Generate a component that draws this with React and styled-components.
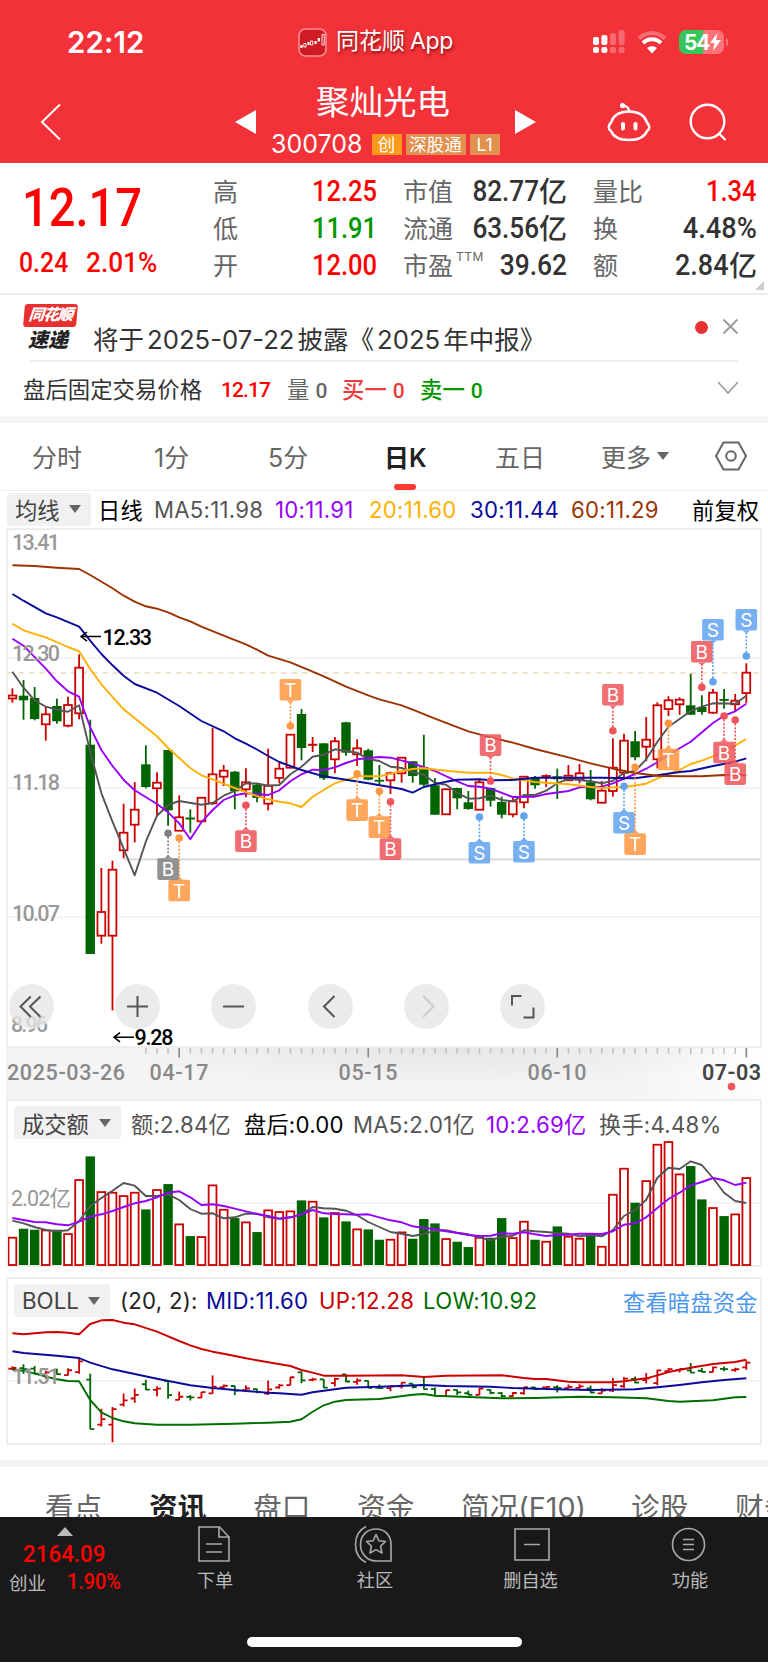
// src/App.jsx
import React from 'react';
import styled, { createGlobalStyle } from 'styled-components';

const RED = '#cc0000';
const GREEN = '#006400';
const PURPLE = '#9600ff';
const ORANGE = '#ffb000';
const NAVY = '#0a0a9c';
const BROWN = '#9c3200';
const GRAY = '#555';

const UI = "'Inter', 'Noto Sans CJK SC', sans-serif";
const DIN = "'Roboto', 'Noto Sans CJK SC', sans-serif";

// [side, high, body top, body bottom, low]
const candles = [
  ['r', 688.3, 695.5, 698.5, 702.7], ['g', 680, 695.7, 700.3, 719.7], ['g', 687, 698, 719, 720.3],
  ['r', 706.7, 714.3, 724.3, 740.7], ['g', 698.7, 706, 721.3, 723.7], ['r', 696.7, 705, 725.7, 727.3],
  ['r', 654.3, 667.7, 713.3, 719.3], ['g', 719.7, 744.7, 954, 954], ['r', 868, 912, 935.7, 943.7],
  ['r', 860.7, 869.7, 935.7, 1010.3], ['r', 803.7, 832.7, 850.3, 858.3], ['r', 782, 809.7, 824.7, 842.3],
  ['g', 745.3, 764.3, 787, 788.3], ['r', 772.3, 782.7, 788.3, 815], ['g', 750, 750, 810.3, 825.7],
  ['r', 795.3, 817.3, 830.7, 830.7], ['g', 809.3, 817.5, 819.5, 832.7], ['r', 797.3, 797.8, 821.3, 822],
  ['r', 727.7, 774.3, 803.3, 805], ['r', 765, 770.7, 776.7, 786], ['g', 771, 771.7, 791.3, 809.3],
  ['r', 768.3, 782.3, 789.3, 797.3], ['g', 783, 784.7, 798, 802.3], ['r', 748.7, 785.7, 803.7, 810.3],
  ['r', 762.7, 768.7, 778, 783.3], ['r', 734, 734.7, 767.7, 768.3], ['g', 709, 714, 748, 760.3],
  ['r', 737, 744, 745.3, 752], ['g', 743.3, 743.3, 778.3, 780], ['r', 737, 741.3, 759.3, 773.3],
  ['g', 721.7, 722.3, 752.7, 755.7], ['r', 739.3, 748.3, 754.3, 766], ['g', 748.7, 750.3, 779.7, 780.3],
  ['g', 765, 779.8, 781, 784], ['r', 771.7, 773.3, 780.3, 794], ['r', 757, 757.7, 773.3, 782.7],
  ['g', 761.3, 761.3, 776, 782.7], ['g', 734.7, 767.3, 784.7, 786], ['g', 778, 785.3, 814.7, 815],
  ['r', 788.7, 789.3, 814.3, 815], ['g', 787.7, 788, 798.3, 809.3], ['g', 791, 802.3, 809, 809.7],
  ['r', 780, 782.3, 809.7, 810], ['g', 787.7, 788, 800.7, 806.7], ['g', 796.7, 802, 814.7, 818.3],
  ['r', 797, 801.3, 814.3, 817.3], ['r', 776, 776.7, 802.3, 808.3], ['g', 776, 778, 785.3, 788.7],
  ['r', 774.3, 775.3, 777.3, 787], ['g', 768.7, 776.3, 779.3, 799], ['r', 765, 775.7, 780.3, 780.3],
  ['r', 764, 773.3, 779.3, 783.3], ['g', 770, 782.3, 799.3, 800.3], ['r', 781, 790.7, 802.7, 803.3],
  ['r', 738.3, 767.7, 791, 796.7], ['r', 733.7, 740.7, 772.7, 780], ['g', 731, 741.3, 757.3, 760.3],
  ['r', 717, 739.7, 746.7, 761.3], ['r', 702.3, 705.3, 759.3, 768.3], ['r', 696.3, 700.3, 709, 716],
  ['r', 697.3, 699.7, 704.3, 714.7], ['g', 673.7, 705.3, 714.7, 715], ['g', 695.3, 707, 712, 714.7],
  ['r', 689, 692.7, 712.7, 713.7], ['g', 689, 699, 700.3, 708.7], ['r', 694, 700.7, 704.3, 711.7],
  ['r', 663.3, 672.7, 693, 703.3],
];

// pairs of [candle index, y]
const ma60 = [[0, 565.3], [2, 566], [4, 567.7], [6, 569], [7, 575], [9, 588.3], [10, 595.7], [11, 601.7], [12, 606.3], [13, 608.7], [14, 612.3], [15, 617.3], [16, 621.3], [17, 626.7], [19, 635.7], [21, 644.3], [22, 649.7], [23, 655.7], [25, 662.3], [27, 671.7], [28, 676.3], [30, 686.7], [32, 695.3], [33, 699.3], [35, 705.3], [36, 709.7], [38, 718.7], [41, 731.3], [43, 737.3], [45, 742.7], [47, 749], [50, 757.3], [52, 763.3], [54, 768.7], [56, 773], [58, 775.7], [60, 776.3], [62, 776.3], [64, 775], [66, 775.3]];
const ma30 = [[0, 594], [1, 600.7], [3, 613.3], [4, 617.3], [6, 626.7], [7, 640.7], [8, 654], [9, 665.3], [10, 675.7], [11, 684], [13, 692.7], [15, 706], [17, 721], [19, 731.3], [20, 738.3], [21, 743.7], [22, 749.5], [23, 756], [24, 762], [26, 770], [28, 776.3], [32, 783.3], [35, 789], [36, 792.7], [37, 787], [39, 781.7], [40, 779.7], [42, 779.3], [43, 780.3], [45, 780], [47, 777.7], [50, 777.7], [53, 777.7], [56, 778.3], [58, 775.3], [60, 772], [61, 771], [63, 766], [65, 761.7], [66, 758.3]];
const ma20 = [[0, 623.7], [1, 630.3], [3, 637.3], [5, 647], [6, 651.3], [7, 669], [8, 684.3], [10, 709.3], [13, 736.3], [14, 748], [16, 768], [17, 775.3], [18, 779.3], [20, 788], [22, 796.2], [23, 799.3], [24, 801.7], [25, 803.3], [26, 807], [27, 796.7], [28, 790], [29, 783.3], [31, 776.3], [33, 776.3], [35, 771], [36, 769], [37, 768.3], [39, 770.7], [41, 772.7], [43, 772.7], [44, 775], [45, 778.5], [47, 782], [50, 784.3], [52, 787], [53, 788], [55, 787], [57, 783.7], [58, 778.3], [60, 770], [61, 764], [62, 760.7], [63, 756.3], [65, 745.3], [66, 739]];
const ma10 = [[0, 638.7], [1, 645.7], [3, 668.7], [4, 681.3], [5, 691.3], [6, 696.7], [7, 727.3], [8, 750], [9, 766], [10, 779.7], [11, 790.3], [13, 804], [14, 812.3], [15, 823.3], [16, 839.3], [17, 822.3], [18, 810], [19, 800], [20, 795.3], [21, 793.3], [22, 794], [23, 795], [24, 790.3], [25, 781.3], [26, 774.3], [27, 769.7], [28, 770], [29, 767.3], [30, 763], [31, 759.3], [33, 757], [34, 757.7], [36, 763.3], [38, 771], [40, 781.3], [41, 786], [42, 786.7], [43, 788.7], [45, 797], [47, 796.7], [48, 794], [50, 791], [51, 787.3], [53, 786.7], [54, 783.3], [56, 774], [57, 768.7], [58, 762.3], [60, 748.3], [61, 741.7], [63, 723], [64, 715.7], [65, 711.3], [66, 703.7]];
const ma5 = [[0, 671.7], [1, 687.7], [2, 700.3], [3, 706.7], [4, 709.7], [5, 711.7], [6, 705.3], [7, 751.7], [8, 793.3], [9, 821.7], [11, 875.3], [12, 841.7], [13, 815.7], [14, 805], [15, 801], [17, 804.7], [18, 803], [19, 795.7], [20, 791], [21, 783.3], [22, 783.5], [23, 785.7], [24, 785], [25, 774.3], [26, 766.7], [27, 756.7], [28, 754.7], [29, 749.3], [31, 752.7], [32, 759], [33, 761], [34, 766.7], [35, 768], [36, 772.3], [37, 774.7], [38, 782.7], [39, 784.7], [40, 792.7], [41, 798.7], [42, 798.3], [43, 795.7], [44, 800], [45, 801.3], [46, 795], [47, 795], [48, 790.7], [49, 783.3], [50, 778.7], [52, 781.3], [53, 783.3], [54, 780.7], [55, 773], [56, 771], [57, 759.3], [58, 741.7], [59, 726.7], [60, 719], [61, 711], [62, 706.7], [63, 703.3], [65, 703.7], [66, 695.7]];

// trade marks: [candle index, letter, dot y, box top, colour]
const marks = [
  [15, 'T', 838, 879.7, 'o'], [14, 'B', 833.3, 858.3, 'k'], [21, 'B', 805.3, 830.3, 'r'],
  [25, 'T', 726, 679, 'o'], [31, 'T', 773.7, 799.3, 'o'], [33, 'T', 791.3, 816.3, 'o'],
  [34, 'B', 801.7, 838.3, 'r'], [42, 'S', 817, 842, 'b'], [43, 'B', 781, 734.3, 'r'],
  [46, 'S', 816, 841, 'b'], [54, 'B', 730.7, 684, 'r'], [55, 'S', 786.3, 812, 'b'],
  [56, 'T', 767.3, 833.3, 'o'], [59, 'T', 723.3, 748.7, 'o'], [62, 'B', 687.3, 641, 'r'],
  [63, 'S', 681.7, 619, 'b'], [64, 'B', 716, 741.7, 'r'], [65, 'B', 720, 763.3, 'r'],
  [66, 'S', 656, 609, 'b'],
];
const markColors = { o: '#ff9640', k: '#808080', r: '#ee5459', b: '#62a3f0' };

const volTops = [427, 400, 403, 405, 403, 416, 254, 183, 290, 292, 302, 292, 342, 284, 266, 387, 422, 425, 270, 343, 368, 381, 410, 345, 350, 348, 315, 319, 366, 353, 378, 402, 402, 433, 433, 411, 430, 371, 384, 431, 439, 455, 427, 427, 368, 428, 379, 433, 439, 393, 424, 430, 415, 454, 298, 220, 322, 257, 148, 140, 237, 212, 312, 338, 362, 357, 248];
const volMa5 = [377, 385, 396, 405, 409, 406, 378, 333, 309, 287, 264, 272, 303, 303, 298, 315, 342, 356, 355, 370, 367, 356, 356, 367, 371, 367, 358, 336, 340, 341, 347, 361, 381, 396, 411, 416, 423, 417, 407, 406, 413, 418, 427, 436, 425, 422, 406, 409, 411, 414, 416, 424, 420, 424, 405, 363, 345, 314, 248, 218, 222, 199, 210, 249, 293, 318, 324];
const volMa10 = [369, 375, 381, 382, 388, 391, 380, 365, 358, 348, 336, 325, 318, 307, 293, 289, 307, 330, 328, 333, 341, 349, 357, 363, 371, 367, 358, 345, 355, 357, 358, 359, 358, 367, 376, 382, 394, 399, 402, 409, 414, 420, 423, 422, 415, 416, 412, 418, 423, 420, 419, 416, 416, 417, 409, 389, 385, 367, 339, 312, 293, 271, 261, 249, 256, 270, 263];

const bollUp = [[0, 190], [1, 193], [3, 187], [4, 186], [5, 188], [6, 193], [7, 162], [8, 151], [9, 150], [10, 158], [11, 163], [13, 185], [15, 213], [16, 226], [17, 237], [18, 245], [19, 251], [21, 265], [23, 277], [25, 288], [26, 300], [27, 308], [28, 317], [30, 317], [35, 316], [37, 321], [39, 317], [44, 316], [46, 324], [47, 327], [48, 327], [50, 335], [51, 337], [54, 337], [55, 334], [56, 329], [57, 325], [58, 316], [59, 306], [61, 293], [63, 282], [65, 276], [66, 269]];
const bollMid = [[0, 244], [1, 249], [4, 257], [6, 264], [7, 278], [9, 298], [11, 312], [13, 326], [16, 346], [18, 354], [21, 363], [23, 368], [24, 370], [26, 374], [27, 367], [30, 353], [33, 350], [37, 345], [39, 348], [43, 350], [45, 354], [48, 357], [52, 360], [56, 358], [58, 352], [60, 345], [62, 337], [64, 330], [66, 325]];
const bollLow = [[0, 299], [1, 302], [2, 311], [4, 328], [5, 333], [6, 334], [7, 390], [8, 427], [9, 444], [10, 454], [11, 460], [13, 464], [16, 464], [20, 461], [23, 458], [25, 455], [26, 448], [27, 425], [28, 406], [29, 395], [30, 390], [33, 387], [36, 374], [37, 372], [38, 377], [41, 381], [44, 385], [47, 384], [51, 380], [54, 382], [57, 385], [59, 393], [60, 395], [63, 391], [65, 382], [66, 381]];

const cx = (i) => 12.4 + 11.12 * i;
const toPoints = (rows) => rows.map(([i, y]) => `${cx(i).toFixed(1)},${y.toFixed(1)}`).join(' ');
const volY = (v) => 1095 + v / 3;
const bollY = (v) => 1270 + v / 3;
const bollPrice = (p) => 1358.3 + (p - 654.3) * 0.236;

const Line = ({ rows, color }) => (
  <polyline points={toPoints(rows)} fill="none" stroke={color} strokeWidth="1.9" strokeLinejoin="round" />
);

const Bar = ({ x, top, bottom, side }) => {
  if (side === 'g') {
    return <rect x={x - 4.7} y={top} width="9.4" height={Math.max(bottom - top, 1.8)} fill={GREEN} />;
  }
  if (bottom - top < 2.5) {
    return <rect x={x - 4.7} y={top - 0.2} width="9.4" height="2" fill={RED} />;
  }
  return (
    <rect x={x - 3.9} y={top} width="7.8" height={bottom - top} fill="#fff" stroke={RED} strokeWidth="1.8" />
  );
};

const Mark = ({ i, letter, dot, top, color }) => {
  const x = cx(i);
  const above = top < dot;
  const edge = above ? top + 21.5 : top;
  const tip = above ? edge + 3 : edge - 3;
  const c = markColors[color];
  return (
    <g>
      <line x1={x} x2={x} y1={dot} y2={edge} stroke={c} strokeWidth="1.6" strokeDasharray="2 1.6" />
      <circle cx={x} cy={dot} r="3.8" fill={c} />
      <g opacity="0.85">
        <rect x={x - 10.8} y={top} width="21.6" height="21.6" rx="1.8" fill={c} />
        <path d={`M${x - 4} ${edge}L${x} ${tip}L${x + 4} ${edge}Z`} fill={c} />
      </g>
      <ChartText x={x} y={top + 17.8} textAnchor="middle" $font={UI} $size={19} $weight={400} $color="#fff">
        {letter}
      </ChartText>
    </g>
  );
};

const PriceChart = () => (
  <Chart viewBox="8 530 752 517" $height={517}>
    {[658, 788, 917].map((y) => (
      <line key={y} x1="8" x2="760" y1={y} y2={y} stroke="#f0f0f0" strokeWidth="1.6" />
    ))}
    <line x1="124" x2="760" y1="859.3" y2="859.3" stroke="#d6d6d6" strokeWidth="1.8" />
    <line x1="8" x2="760" y1="673" y2="673" stroke="#ecd9bd" strokeWidth="1.6" strokeDasharray="5.5 5" />
    {candles.map(([side, high, top, bottom, low], i) => (
      <g key={i}>
        <line x1={cx(i)} x2={cx(i)} y1={high} y2={low} stroke={side === 'r' ? RED : GREEN} strokeWidth="1.8" />
        <Bar x={cx(i)} top={top} bottom={bottom} side={side} />
      </g>
    ))}
    <Line rows={ma5} color={GRAY} />
    <Line rows={ma10} color={PURPLE} />
    <Line rows={ma20} color={ORANGE} />
    <Line rows={ma30} color={NAVY} />
    <Line rows={ma60} color={BROWN} />
    {marks.map(([i, letter, dot, top, color]) => (
      <Mark key={i} i={i} letter={letter} dot={dot} top={top} color={color} />
    ))}
    <ChartText x="12" y="549.7" textLength="48" $weight={500}>13.41</ChartText>
    <ChartText x="12" y="661" textLength="48" $weight={500}>12.30</ChartText>
    <ChartText x="12" y="790.3" textLength="48" $weight={500}>11.18</ChartText>
    <ChartText x="12" y="920.5" textLength="48" $weight={500}>10.07</ChartText>
    <ChartText x="11" y="1031.7" textLength="37" $weight={500}>8.96</ChartText>
    <path d="M101 636.6H81M87 632L81 636.6L87 641.2" fill="none" stroke="#000" strokeWidth="1.5" />
    <ChartText x="102.5" y="644.6" textLength="49.5" $weight={500} $color="#000">12.33</ChartText>
    <path d="M134 1037.3H114M120 1032.7L114 1037.3L120 1041.9" fill="none" stroke="#000" strokeWidth="1.5" />
    <ChartText x="134.5" y="1045" textLength="39" $weight={500} $color="#000">9.28</ChartText>
  </Chart>
);

const DateAxis = () => (
  <Chart viewBox="6 1047 762 52" $height={52} $width={762}>
    <defs>
      <linearGradient id="fade" x1="0" x2="1" y1="0" y2="0">
        <stop offset="0.82" stopColor="#f4f4f4" />
        <stop offset="1" stopColor="#fdfdfd" />
      </linearGradient>
      <radialGradient id="shade" cx="0.5" cy="0" r="0.5" gradientTransform="translate(0 0) scale(1 1.5)">
        <stop offset="0" stopColor="#000" stopOpacity="0.06" />
        <stop offset="1" stopColor="#000" stopOpacity="0" />
      </radialGradient>
    </defs>
    <rect x="6" y="1047" width="756" height="52" fill="url(#fade)" />
    <rect x="110" y="1047" width="652" height="52" fill="url(#shade)" />
    {Array.from({ length: 55 }, (_, k) => k + 12).map((i) => {
      const major = (i - 15) % 17 === 0;
      return (
        <line
          key={i}
          x1={cx(i)}
          x2={cx(i)}
          y1="1047"
          y2={major ? 1056.5 : 1053}
          stroke={major ? '#888' : '#c4c4c4'}
          strokeWidth="1.6"
        />
      );
    })}
    <ChartText x="7" y="1079" textLength="118" $weight={500} $color="#888">2025-03-26</ChartText>
    <ChartText x="149.5" y="1079" textLength="59" $weight={500} $color="#888">04-17</ChartText>
    <ChartText x="338.5" y="1079" textLength="59" $weight={500} $color="#888">05-15</ChartText>
    <ChartText x="527.5" y="1079" textLength="59" $weight={500} $color="#888">06-10</ChartText>
    <ChartText x="702" y="1079" textLength="59" $weight={600} $color="#444">07-03</ChartText>
    <circle cx="731.5" cy="1085.6" r="3.8" fill="#f25555" />
  </Chart>
);

const VolumeChart = () => (
  <Chart viewBox="8 1139 752 127" $height={127}>
    <line x1="8" x2="760" y1="1203" y2="1203" stroke="#f0f0f0" strokeWidth="1.6" />
    {volTops.map((v, i) => (
      <Bar key={i} x={cx(i)} top={volY(v) + 0.4} bottom={1265} side={candles[i][0]} />
    ))}
    <Line rows={volMa5.map((v, i) => [i, volY(v)])} color={GRAY} />
    <Line rows={volMa10.map((v, i) => [i, volY(v)])} color={PURPLE} />
    <ChartText x="11" y="1206" textLength="60">2.02亿</ChartText>
  </Chart>
);

const BollChart = () => (
  <Chart viewBox="8 1317 752 127" $height={127}>
    <line x1="8" x2="760" y1="1381" y2="1381" stroke="#f0f0f0" strokeWidth="1.6" />
    {candles.map(([side, high, top, bottom, low], i) => {
      const x = cx(i);
      const open = bollPrice(side === 'r' ? bottom : top);
      const close = bollPrice(side === 'r' ? top : bottom);
      return (
        <path
          key={i}
          d={`M${x} ${bollPrice(high)}V${bollPrice(low)}M${x - 4} ${open}H${x}M${x} ${close}H${x + 4}`}
          fill="none"
          stroke={side === 'r' ? RED : GREEN}
          strokeWidth="1.8"
        />
      );
    })}
    <Line rows={bollUp.map(([i, v]) => [i, bollY(v)])} color={RED} />
    <Line rows={bollMid.map(([i, v]) => [i, bollY(v)])} color={NAVY} />
    <Line rows={bollLow.map(([i, v]) => [i, bollY(v)])} color="#006e00" />
    <ChartText x="12" y="1384" textLength="48" $weight={500}>11.51</ChartText>
  </Chart>
);

const StatusBar = () => (
  <Status>
    <Clock>22:12</Clock>
    <svg width="29" height="29" viewBox="0 0 29 29">
      <rect x="1" y="1" width="27" height="27" rx="6.5" fill="#cf1c24" stroke="#ff8e90" strokeWidth="1.6" />
      <path d="M3.5 17V20M10.500 14V17M17.500 13V16M20.800 10V13.500" stroke="#fff" strokeWidth="2.200" />
      <path d="M5.800 15.500H8V19H5.800ZM12.500 13H14.700V17H12.500ZM24 6.500H26.200V17H24Z" stroke="#fff" fill="none" strokeWidth="0.900" />
    </svg>
    <AppName>同花顺<span>App</span></AppName>
    <svg width="34" height="24" viewBox="0 0 34 24">
      <g fill="#fff">
        <rect x="1" y="7" width="6" height="8" rx="2" />
        <rect x="1" y="17" width="6" height="6" rx="2" />
        <rect x="9.4" y="5" width="6" height="10" rx="2" />
        <rect x="9.4" y="17" width="6" height="6" rx="2" />
      </g>
      <g fill="#fff" opacity="0.28">
        <rect x="18" y="3" width="6" height="12" rx="2" />
        <rect x="18" y="17" width="6" height="6" rx="2" />
        <rect x="26.6" y="0" width="6" height="15" rx="2" />
        <rect x="26.6" y="17" width="6" height="6" rx="2" />
      </g>
    </svg>
    <Wifi width="30" height="24" viewBox="0 0 30 24">
      <path d="M2 8.5C9.5 1 20.500 1 28 8.500" stroke="#fff" strokeWidth="4" fill="none" opacity="0.3" />
      <path d="M6 13C11 8 19 8 24 13" stroke="#fff" strokeWidth="4" fill="none" />
      <path d="M15 23.500L10 18C13 15.500 17 15.500 20 18Z" fill="#fff" />
    </Wifi>
    <Battery>
      54
      <svg width="11" height="18" viewBox="0 0 11 18">
        <path d="M7.500 0L0 10H4.500L3 18L11 7H6Z" fill="#fff" />
      </svg>
    </Battery>
    <BatteryCap />
  </Status>
);

const Header = () => (
  <Nav>
    <NavSide>
      <svg width="22" height="38" viewBox="0 0 22 38">
        <path d="M20 1.500L2 19L20 36.500" fill="none" stroke="#fff" strokeWidth="2" />
      </svg>
    </NavSide>
    <svg width="21" height="24" viewBox="0 0 21 24"><path d="M21 0V24L0 12Z" fill="#fff" /></svg>
    <Stock>
      <StockName>聚灿光电</StockName>
      <StockCode>
        300708
        <Tag $bg="#fb9a1a" $w={30}>创</Tag>
        <Tag $w={60}>深股通</Tag>
        <Tag $w={30}>L1</Tag>
      </StockCode>
    </Stock>
    <svg width="21" height="24" viewBox="0 0 21 24"><path d="M0 0V24L21 12Z" fill="#fff" /></svg>
    <NavActions>
      <svg width="44" height="40" viewBox="0 0 44 40" fill="none" stroke="#fff" strokeWidth="2.500" strokeLinecap="round">
        <path d="M22 9.500C32 9.500 38 14 40 20.500C43 23.500 43 27 40 29C37.500 35 32 38 22 38S6.500 35 4 29C1 27 1 23.500 4 20.500C6 14 12 9.500 22 9.500Z" />
        <path d="M22 9C22 5.500 20 4.500 16 3.500" />
        <circle cx="15.500" cy="3.600" r="1.400" fill="#fff" />
        <path d="M16 22V26.500M28.500 22V26.500" strokeWidth="4" />
      </svg>
      <svg width="38" height="38" viewBox="0 0 38 38" fill="none" stroke="#fff" strokeWidth="2.400">
        <circle cx="18.500" cy="18.500" r="16.800" />
        <path d="M30 30.500L36.500 37" />
      </svg>
    </NavActions>
  </Nav>
);

const Quote = () => (
  <QuoteBoard>
    <PriceBox>
      <Figure $size={54} $color="#ff0000" $origin="left">12.17</Figure>
      <PriceChange>
        <Figure $size={27} $color="#ff0000" $origin="left" $scale={0.92}>0.24</Figure>
        <Figure $size={27} $color="#ff0000" $origin="left" $scale={0.97}>2.01%</Figure>
      </PriceChange>
    </PriceBox>
    <QuoteColumn $w={164} $gap={26}>
      <QuoteCell><span>高</span><Figure $color="#ff0000" $scale={0.88}>12.25</Figure></QuoteCell>
      <QuoteCell><span>低</span><Figure $color="#009600" $scale={0.88}>11.91</Figure></QuoteCell>
      <QuoteCell><span>开</span><Figure $color="#ff0000" $scale={0.88}>12.00</Figure></QuoteCell>
    </QuoteColumn>
    <QuoteColumn $w={164} $gap={26}>
      <QuoteCell><span>市值</span><Value><Figure $scale={0.9}>82.77</Figure><Unit>亿</Unit></Value></QuoteCell>
      <QuoteCell><span>流通</span><Value><Figure $scale={0.9}>63.56</Figure><Unit>亿</Unit></Value></QuoteCell>
      <QuoteCell><span>市盈<sup>TTM</sup></span><Figure $scale={0.91}>39.62</Figure></QuoteCell>
    </QuoteColumn>
    <QuoteColumn $w={164} $gap={0}>
      <QuoteCell><span>量比</span><Figure $color="#ff0000" $scale={0.88}>1.34</Figure></QuoteCell>
      <QuoteCell><span>换</span><Figure $scale={0.94}>4.48%</Figure></QuoteCell>
      <QuoteCell><span>额</span><Value><Figure $scale={0.93}>2.84</Figure><Unit>亿</Unit></Value></QuoteCell>
    </QuoteColumn>
    <Corner />
  </QuoteBoard>
);

const News = () => (
  <NewsRow>
    <NewsLogo>
      <LogoTop>同花顺</LogoTop>
      <LogoBottom>速递</LogoBottom>
    </NewsLogo>
    <NewsText>
      将于<b>2025-07-22</b>披露《<b>2025</b>年中报》
    </NewsText>
    <NewsDot />
    <svg width="17" height="17" viewBox="0 0 17 17">
      <path d="M1.500 1.500L15.500 15.500M15.500 1.500L1.500 15.500" stroke="#999" strokeWidth="1.800" />
    </svg>
  </NewsRow>
);

const AfterHours = () => (
  <AfterRow>
    <AfterItem $w={198} $color="#333">盘后固定交易价格</AfterItem>
    <AfterItem $w={66} $color="#ff0000" $flush><i>12.17</i></AfterItem>
    <AfterItem $w={55} $color="#666">量<i>0</i></AfterItem>
    <AfterItem $w={78} $color="#eb3b3b" $bold>买一<i>0</i></AfterItem>
    <AfterItem $w={297} $color="#009600" $bold>卖一<i>0</i></AfterItem>
    <svg width="22" height="14" viewBox="0 0 22 14">
      <path d="M1 1L11 12L21 1" fill="none" stroke="#999" strokeWidth="1.600" />
    </svg>
  </AfterRow>
);

const toolIcons = [
  { name: 'first', d: 'M-.7 -10L-11 0L-.7 10.500M9 -10L-1.500 0L9 10.500' },
  { name: 'zoomIn', d: 'M-10.500 0H10.500M0 -10.500V10.500' },
  { name: 'zoomOut', d: 'M-10.500 0H10.500' },
  { name: 'prev', d: 'M4 -10.500L-6.500 0L4 10.500' },
  { name: 'next', d: 'M-3.500 -10.500L7 0L-3.500 10.500', muted: true },
  { name: 'expand', d: 'M-10.500 -1V-10.500H-1M11 1V11H1' },
];

const Tools = () => (
  <ToolRow>
    {toolIcons.map((tool) => (
      <ToolButton key={tool.name}>
        <svg width="45" height="45" viewBox="-22.500 -22.500 45 45">
          <path d={tool.d} fill="none" stroke={tool.muted ? '#ccc' : '#555'} strokeWidth="2" />
        </svg>
      </ToolButton>
    ))}
  </ToolRow>
);

const BottomBar = () => (
  <Footer>
    <FooterRow>
      <IndexBox>
        <IndexArrow />
        <Figure $size={24} $color="#ff0000" $origin="center" $scale={0.93}>2164.09</Figure>
        <IndexName>
          创业
          <Figure $size={21.500} $color="#ff0000" $origin="left" $scale={0.92}>1.90%</Figure>
        </IndexName>
      </IndexBox>
      <FooterItem $w={172}>
        <svg width="36" height="38" viewBox="0 0 36 38">
          <path d="M2 2H22.500L32 12V36H2ZM22 2V12H32M9 19H25M9 27H25" />
        </svg>
        下单
      </FooterItem>
      <FooterItem $w={148}>
        <svg width="42" height="38" viewBox="0 0 42 38">
          <path d="M37 36H22C13 36 6.500 28.500 6.500 19.500S13 4 22 4S37 10.500 37 19.500Z" />
          <path d="M12 1.500C5 5 1.500 11.500 1.500 19.500S5 34 12 37.500" />
          <path d="M22 9.500L24.800 15.800L31.500 16.500L26.600 21.200L28 28L22 24.600L16 28L17.400 21.200L12.500 16.500L19.200 15.800Z" strokeLinejoin="round" />
        </svg>
        社区
      </FooterItem>
      <FooterItem $w={163}>
        <svg width="38" height="38" viewBox="0 0 38 38">
          <path d="M3 4H37V35H3ZM12 19.500H28" />
        </svg>
        删自选
      </FooterItem>
      <FooterItem $w={156}>
        <svg width="40" height="38" viewBox="0 0 40 38">
          <circle cx="18.500" cy="19.500" r="16" />
          <path d="M13 14.500H24M13 19.500H24M13 24.500H24" />
        </svg>
        功能
      </FooterItem>
    </FooterRow>
    <HomeBar />
  </Footer>
);

const App = () => (
  <Page>
    <GlobalStyle />
    <Top>
      <StatusBar />
      <Header />
    </Top>
    <Quote />
    <News />
    <AfterHours />
    <Band $h={7} />
    <PeriodTabs>
      <Period $w={122}>分时</Period>
      <Period $w={114}>1分</Period>
      <Period $w={116}>5分</Period>
      <Period $w={111} $active>日K</Period>
      <Period $w={106}>五日</Period>
      <Period $w={113}>更多<Caret /></Period>
      <svg width="34" height="30" viewBox="0 0 34 30" fill="none" stroke="#666" strokeWidth="2">
        <path d="M9.500 1.500H24.500L32 15L24.500 28.500H9.500L2 15Z" strokeLinejoin="round" />
        <circle cx="17" cy="15" r="4.800" />
      </svg>
    </PeriodTabs>
    <MaRow>
      <Picker $w={84}>均线<Caret /></Picker>
      <Legend $w={56} $color="#000">日线</Legend>
      <Legend $w={121} $color={GRAY}>MA5:11.98</Legend>
      <Legend $w={94} $color={PURPLE}>10:11.91</Legend>
      <Legend $w={101} $color={ORANGE}>20:11.60</Legend>
      <Legend $w={101} $color={NAVY}>30:11.44</Legend>
      <Legend $w={121} $color={BROWN}>60:11.29</Legend>
      <Legend $w={70} $color="#000">前复权</Legend>
    </MaRow>
    <Panel $h={520}>
      <PriceChart />
      <Tools />
    </Panel>
    <AxisRow><DateAxis /></AxisRow>
    <Panel $h={168}>
      <PanelHead>
        <Picker $w={107}>成交额<Caret /></Picker>
        <Legend $w={113} $color={GRAY}>额:2.84亿</Legend>
        <Legend $w={109} $color="#000">盘后:0.00</Legend>
        <Legend $w={133} $color={GRAY}>MA5:2.01亿</Legend>
        <Legend $w={113} $color={PURPLE}>10:2.69亿</Legend>
        <Legend $w={120} $color={GRAY}>换手:4.48%</Legend>
      </PanelHead>
      <VolumeChart />
    </Panel>
    <Panel $h={168} $gap={10}>
      <PanelHead>
        <Picker $w={96}>BOLL<Caret /></Picker>
        <Legend $w={86} $color="#222">(20, 2):</Legend>
        <Legend $w={113} $color={NAVY}>MID:11.60</Legend>
        <Legend $w={104} $color={RED}>UP:12.28</Legend>
        <Legend $w={200} $color="#006e00">LOW:10.92</Legend>
        <Legend $w={140} $color="#4a96ee">查看暗盘资金</Legend>
      </PanelHead>
      <BollChart />
    </Panel>
    <Band $h={7} $gap={15} />
    <SectionTabs>
      <Section $w={104}>看点</Section>
      <Section $w={104} $active>资讯</Section>
      <Section $w={104}>盘口</Section>
      <Section $w={104}>资金</Section>
      <Section $w={170}>简况(F10)</Section>
      <Section $w={104}>诊股</Section>
      <Section $w={60}>财务</Section>
    </SectionTabs>
    <BottomBar />
  </Page>
);

export default App;

const GlobalStyle = createGlobalStyle`
  * {
    box-sizing: border-box;
  }

  body {
    margin: 0;
    background: #fff;
    font-family: ${UI};
  }

  svg {
    display: block;
    flex: none;
  }
`;

const Page = styled.div`
  width: 768px;
  height: 1663px;
  overflow: hidden;
  background: #fff;
`;

const Top = styled.header`
  height: 163px;
  background: #f23138;
  color: #fff;
`;

const Status = styled.div`
  display: flex;
  align-items: center;
  height: 84px;
  padding-left: 67px;
`;

const Clock = styled.div`
  width: 231px;
  font-size: 29.5px;
  font-weight: 600;
  letter-spacing: 0.1px;
`;

const AppName = styled.div`
  width: 265px;
  padding-left: 9px;
  font-size: 23px;
  line-height: 30px;
  padding-bottom: 2px;
  white-space: nowrap;
  text-shadow: 1px 2px 3px rgba(90, 0, 0, 0.7);

  span {
    margin-left: 5px;
    font-size: 23px;
    letter-spacing: -0.4px;
  }
`;

const Wifi = styled.svg`
  margin: 0 12px 0 11px;
`;

const Battery = styled.div`
  display: flex;
  align-items: center;
  gap: 1px;
  width: 45px;
  height: 24px;
  padding-left: 5px;
  border-radius: 7px;
  background: linear-gradient(90deg, #35c759 54%, #f97479 54%);
  font-size: 21px;
  font-weight: 700;
  letter-spacing: -1.2px;
`;

const BatteryCap = styled.div`
  width: 2px;
  height: 8px;
  margin-left: 2px;
  border-radius: 0 2px 2px 0;
  background: #f97479;
`;

const Nav = styled.div`
  display: flex;
  align-items: center;
  height: 76px;
`;

const NavSide = styled.div`
  width: 235px;
  padding-left: 40px;
`;

const Stock = styled.div`
  width: 259px;
`;

const StockName = styled.div`
  height: 44px;
  padding-left: 60px;
  font-size: 33.5px;
  line-height: 38px;
`;

const StockCode = styled.div`
  display: flex;
  align-items: center;
  height: 34px;
  padding-left: 15px;
  font-size: 25px;
`;

const Tag = styled.span`
  width: ${props => props.$w}px;
  height: 21px;
  margin-left: ${props => (props.$bg ? 9 : 4)}px;
  background: ${props => props.$bg || '#e2904e'};
  font-size: 17.5px;
  line-height: 21px;
  text-align: center;
`;

const NavActions = styled.div`
  display: flex;
  align-items: center;
  gap: 38px;
  padding-left: 71px;
`;

const QuoteBoard = styled.section`
  position: relative;
  display: flex;
  height: 132px;
  border-bottom: 2px solid #eee;
`;

const Figure = styled.span`
  display: inline-block;
  color: ${props => props.$color || '#333'};
  font-family: ${DIN};
  font-size: ${props => props.$size || 29}px;
  font-weight: 500;
  line-height: 1;
  white-space: nowrap;
  transform: scaleX(${props => props.$scale || 0.87});
  transform-origin: ${props => props.$origin || 'right'};
`;

const Value = styled.span`
  display: flex;
  align-items: center;
`;

const Unit = styled.span`
  color: #333;
  font-size: 28px;
  font-weight: 500;
  line-height: 1;
`;

const PriceBox = styled.div`
  width: 213px;
  padding: 18px 0 0 22px;
`;

const PriceChange = styled.div`
  display: flex;
  gap: 13px;
  margin: 15px 0 0 -3px;
`;

const QuoteColumn = styled.div`
  width: ${props => props.$w}px;
  margin-right: ${props => props.$gap}px;
  padding-top: 10px;
`;

const QuoteCell = styled.div`
  display: flex;
  align-items: center;
  justify-content: space-between;
  height: 37px;
  color: #666;
  font-size: 25px;
  line-height: 36px;
  white-space: nowrap;

  sup {
    margin-left: 3px;
    font-size: 12px;
    line-height: 0;
    letter-spacing: 0.5px;
    vertical-align: 14px;
  }
`;

const Corner = styled.i`
  position: absolute;
  right: 4px;
  bottom: 3px;
  border-bottom: 9px solid #ccc;
  border-left: 9px solid transparent;
`;

const NewsRow = styled.section`
  display: flex;
  height: 67px;
  margin: 0 30px;
  border-bottom: 2px solid #f0f0f0;
`;

const NewsLogo = styled.div`
  width: 70px;
  margin-left: -7px;
  padding: 9px 0 0 1px;
  font-weight: 900;
  font-style: italic;
`;

const LogoTop = styled.div`
  width: 53px;
  height: 23px;
  border-radius: 3px;
  background: #e93030;
  color: #fff;
  font-size: 15.5px;
  line-height: 22px;
  text-align: center;
  letter-spacing: -1px;
  transform: skewX(-5deg);
`;

const LogoBottom = styled.div`
  padding-left: 4px;
  color: #222;
  font-size: 20px;
  line-height: 26px;
`;

const NewsText = styled.div`
  flex: 1;
  padding-top: 26px;
  color: #333;
  font-size: 25.5px;
  line-height: 38px;
  white-space: nowrap;

  b {
    margin: 0 3px;
    font-weight: 400;
    font-size: 25.7px;
  }
`;

const NewsDot = styled.i`
  width: 13px;
  height: 13px;
  margin: 25.5px 14px 0 0;
  border-radius: 50%;
  background: #e93030;

  & + svg {
    margin: 23px -1px 0 0;
  }
`;

const AfterRow = styled.section`
  display: flex;
  align-items: center;
  height: 54px;
  padding: 0 0 2px 23px;
`;

const AfterItem = styled.div`
  width: ${props => props.$w}px;
  color: ${props => props.$color};
  font-size: 22.4px;
  font-weight: ${props => (props.$bold ? 500 : 400)};
  white-space: nowrap;

  i {
    margin-left: ${props => (props.$flush ? 0 : 6)}px;
    font-family: ${DIN};
    font-size: 21px;
    font-style: normal;
    font-weight: 500;
    letter-spacing: -0.9px;
  }
`;

const Band = styled.div`
  height: ${props => props.$h}px;
  margin-top: ${props => props.$gap || 0}px;
  background: #f4f4f4;
`;

const PeriodTabs = styled.nav`
  display: flex;
  align-items: center;
  height: 68px;
  padding: 0 0 2px 32px;
  border-bottom: 1px solid #eee;
`;

const Period = styled.div`
  position: relative;
  display: flex;
  align-items: center;
  gap: 6px;
  width: ${props => props.$w}px;
  color: ${props => (props.$active ? '#222' : '#666')};
  font-size: 25px;
  font-weight: ${props => (props.$active ? 600 : 400)};

  &::after {
    content: '';
    display: ${props => (props.$active ? 'block' : 'none')};
    position: absolute;
    left: 10px;
    bottom: -16px;
    width: 22px;
    height: 6px;
    border-radius: 3px;
    background: #ff3a30;
  }
`;

const Caret = styled.i`
  width: 0;
  border: 6px solid transparent;
  border-top: 8px solid #666;
  border-bottom: 0;
`;

const MaRow = styled.div`
  display: flex;
  align-items: center;
  height: 37px;
  padding: 0 0 1px 7px;
`;

const Picker = styled.div`
  display: flex;
  flex: none;
  align-items: center;
  justify-content: space-between;
  width: ${props => props.$w}px;
  height: 33px;
  padding: 0 10px 0 8px;
  margin-right: 7px;
  border-radius: 3px;
  background: #f1f1f1;
  color: #444;
  font-size: 22.3px;
`;

const Legend = styled.div`
  width: ${props => props.$w}px;
  flex: none;
  color: ${props => props.$color};
  font-size: 22.2px;
  letter-spacing: 0.25px;
  white-space: nowrap;
`;

const Panel = styled.section`
  position: relative;
  height: ${props => props.$h}px;
  margin: ${props => props.$gap || 0}px 6px 0;
  border: 2px solid #eee;
`;

const PanelHead = styled.div`
  display: flex;
  align-items: center;
  height: 38px;
  padding: 5px 0 0 6px;

  ${Picker} {
    margin-right: 10px;
  }
`;

const Chart = styled.svg`
  width: ${props => props.$width || 752}px;
  height: ${props => props.$height}px;
`;

const ChartText = styled.text`
  fill: ${props => props.$color || '#999'};
  font-family: ${props => props.$font || DIN};
  font-size: ${props => props.$size || 21.5}px;
  font-weight: ${props => props.$weight || 400};
`;

const AxisRow = styled.div`
  height: 51px;
  padding-left: 6px;
`;

const ToolRow = styled.div`
  position: absolute;
  left: 1px;
  bottom: 17px;
  display: flex;
  gap: 51.3px;

  & > :first-child {
    margin-right: 9.7px;
  }
`;

const ToolButton = styled.div`
  width: 45px;
  height: 45px;
  border-radius: 50%;
  background: rgba(229, 229, 229, 0.78);
`;

const SectionTabs = styled.nav`
  display: flex;
  height: 50px;
  padding: 20px 0 0 45px;
  overflow: hidden;
`;

const Section = styled.div`
  flex: none;
  width: ${props => props.$w}px;
  color: ${props => (props.$active ? '#222' : '#666')};
  font-size: 28.7px;
  font-weight: ${props => (props.$active ? 600 : 400)};
  line-height: 42px;
  white-space: nowrap;
`;

const Footer = styled.footer`
  height: 145px;
  background: #191919;
`;

const FooterRow = styled.div`
  display: flex;
  height: 120px;
`;

const IndexBox = styled.div`
  display: flex;
  flex-direction: column;
  align-items: center;
  width: 129px;
  padding-top: 10px;
`;

const IndexArrow = styled.i`
  margin-bottom: 6px;
  border: 8px solid transparent;
  border-top: 0;
  border-bottom: 9px solid #bbb;
`;

const IndexName = styled.div`
  display: flex;
  align-items: center;
  gap: 21px;
  width: 100%;
  padding: 3px 0 0 9px;
  color: #bbb;
  font-size: 18.5px;
`;

const FooterItem = styled.div`
  display: flex;
  flex-direction: column;
  align-items: center;
  gap: 3px;
  width: ${props => props.$w}px;
  padding-top: 8px;
  color: #bbb;
  font-size: 18.2px;
  line-height: 28px;

  svg {
    fill: none;
    stroke: #aaa;
    stroke-width: 1.6px;
  }
`;

const HomeBar = styled.div`
  width: 275px;
  height: 10px;
  margin-left: 247px;
  border-radius: 5px;
  background: #fff;
`;
